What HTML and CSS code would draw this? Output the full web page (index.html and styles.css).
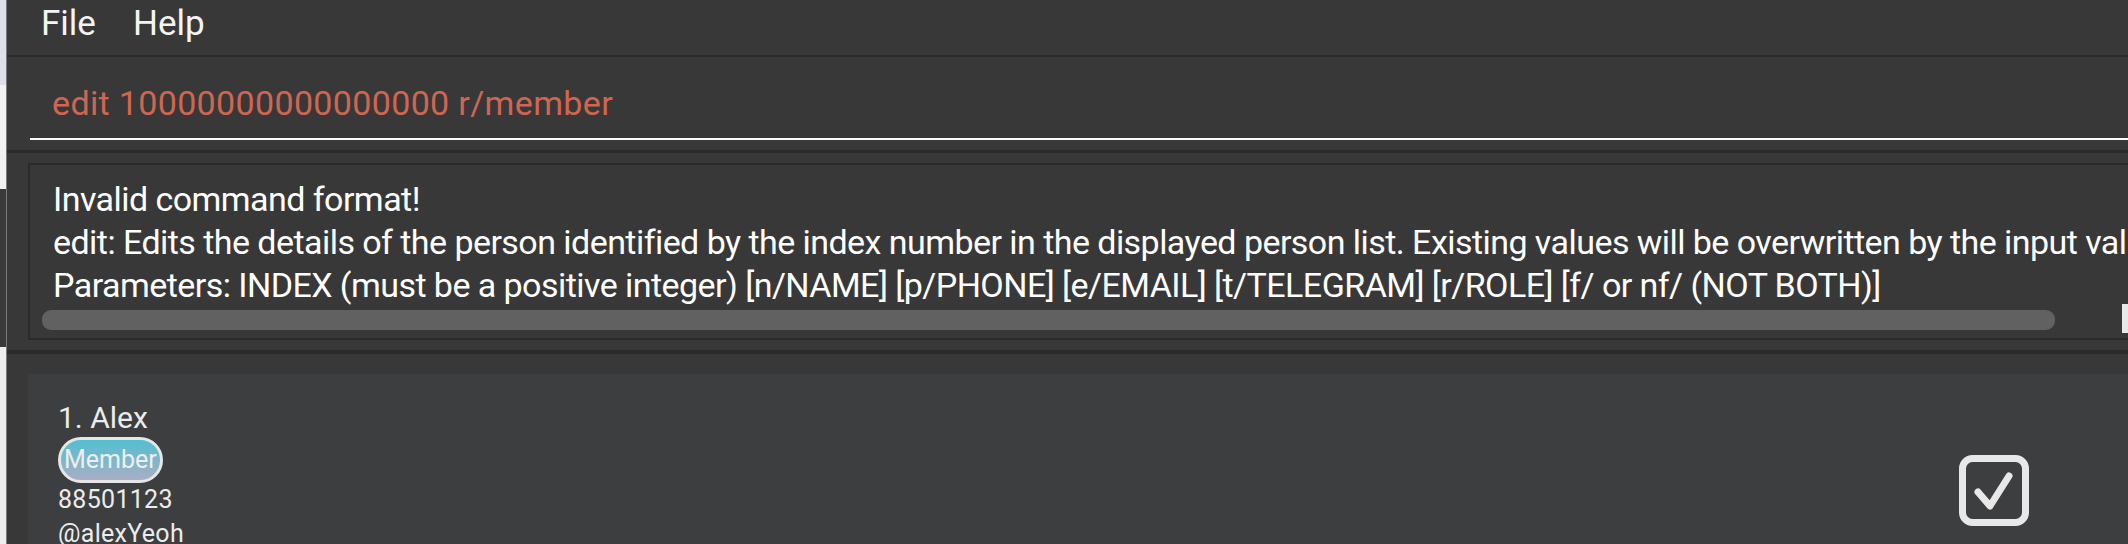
FILE: index.html
```html
<!DOCTYPE html>
<html>
<head>
<meta charset="utf-8">
<link rel="stylesheet" href="styles.css">
</head>
<body>
<div class="screen">
  <div class="edge">
    <div class="edge-a"></div>
    <div class="edge-b"></div>
    <div class="edge-c"></div>
    <div class="edge-d"></div>
  </div>
  <div class="app">
    <div class="menubar">
      <span class="menu-item">File</span>
      <span class="menu-item">Help</span>
    </div>
    <div class="command">
      <div class="cmd-field">edit 10000000000000000 r/member</div>
    </div>
    <div class="result-pane">
      <div class="result-box">
        <div class="result-text">
          <div class="line">Invalid command format!</div>
          <div class="line">edit: Edits the details of the person identified by the index number in the displayed person list. Existing values will be overwritten by the input values.</div>
          <div class="line">Parameters: INDEX (must be a positive integer) [n/NAME] [p/PHONE] [e/EMAIL] [t/TELEGRAM] [r/ROLE] [f/ or nf/ (NOT BOTH)]</div>
        </div>
        <div class="hscroll"></div>
      </div>
    </div>
    <div class="list-pane">
      <div class="card">
        <div class="card-info">
          <div class="name">1. Alex</div>
          <div class="tags"><span class="badge">Member</span></div>
          <div class="field">88501123</div>
          <div class="field">@alexYeoh</div>
        </div>
        <svg class="check" width="70" height="71" viewBox="0 0 70 71">
          <rect x="3.5" y="3.5" width="63" height="64" rx="10" fill="none" stroke="#e8e8e8" stroke-width="7"/>
          <path d="M19 37 L31 51 L50 21" fill="none" stroke="#e8e8e8" stroke-width="7" stroke-linecap="round" stroke-linejoin="round"/>
        </svg>
      </div>
    </div>
  </div>
  <div class="vthumb"></div>
</div>
</body>
</html>
```
FILE: styles.css
```css
html, body {
  margin: 0;
  padding: 0;
  background: #383838;
}
.screen {
  position: relative;
  width: 2128px;
  height: 544px;
  overflow: hidden;
  display: flex;
  align-items: flex-start;
  font-family: "Roboto", "Liberation Sans", sans-serif;
}
.edge {
  width: 6px;
  height: 544px;
  flex: none;
  display: flex;
  flex-direction: column;
  border-right: 1px solid #7a7a7a;
}
.edge-a { flex: none; height: 85px; background: #dde0e8; }
.edge-b { flex: none; height: 104px; background: #f2f2f2; }
.edge-c { flex: none; height: 158px; background: #3a3a3a; }
.edge-d { flex: 1; background: #eeeeee; }
.app {
  flex: none;
  width: 2121px;
  display: flex;
  flex-direction: column;
  background: #383838;
}
.app > * {
  flex: none;
}
.menubar {
  height: 55px;
  border-bottom: 2px solid #2a2a2a;
  display: flex;
  align-items: flex-start;
  padding-left: 34px;
  gap: 37px;
}
.menu-item {
  color: #f4f4f4;
  font-size: 35px;
  line-height: 40px;
  padding-top: 4px;
}
.command {
  padding: 26px 0 10px 23px;
  border-bottom: 3px solid #2a2a2a;
}
.cmd-field {
  color: #d06651;
  font-size: 34px;
  line-height: 40px;
  letter-spacing: 0.35px;
  padding: 0 0 15px 22px;
  border-bottom: 2px solid #ffffff;
  white-space: nowrap;
}
.result-pane {
  padding: 10px 0 10px 21px;
  border-bottom: 4px solid #2a2a2a;
}
.result-box {
  width: 2200px;
  height: 177px;
  border: 2px solid #2a2a2a;
  padding: 13px 0 0 23px;
  box-sizing: border-box;
}
.result-text {
  color: #ffffff;
  font-size: 34px;
  line-height: 43px;
  letter-spacing: -0.55px;
  white-space: nowrap;
}
.hscroll {
  margin: 3px 0 0 -11px;
  width: 2013px;
  height: 20px;
  border-radius: 9px;
  background: #616161;
}
.list-pane {
  padding: 20px 0 0 21px;
}
.card {
  background: #3c3e3f;
  height: 200px;
  display: flex;
  justify-content: space-between;
  align-items: flex-start;
  padding-left: 30px;
}
.card-info {
  padding-top: 26px;
  color: #ececec;
}
.name {
  font-size: 30px;
  line-height: 36px;
}
.tags {
  margin-top: 1px;
  display: flex;
}
.badge {
  height: 46px;
  box-sizing: border-box;
  border: 3px solid #e6e6e6;
  border-radius: 23px;
  background: linear-gradient(#52bfd0, #a9aec5);
  color: #eeeeee;
  font-size: 25px;
  line-height: 40px;
  padding: 0 3px;
}
.field {
  font-size: 25px;
  line-height: 34px;
  letter-spacing: 0.3px;
}
.check {
  margin-top: 81px;
  margin-right: 99px;
}
.vthumb {
  position: absolute;
  left: 2122px;
  top: 304px;
  width: 6px;
  height: 29px;
  background: #e8e8e8;
}
```
